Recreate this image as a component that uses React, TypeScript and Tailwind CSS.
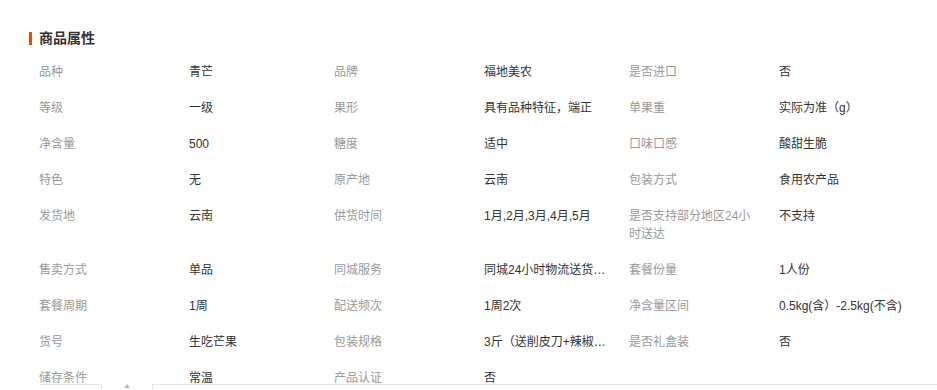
const rows: [string, string][][] = [
  [["品种", "青芒"], ["品牌", "福地美农"], ["是否进口", "否"]],
  [["等级", "一级"], ["果形", "具有品种特征，端正"], ["单果重", "实际为准（g）"]],
  [["净含量", "500"], ["糖度", "适中"], ["口味口感", "酸甜生脆"]],
  [["特色", "无"], ["原产地", "云南"], ["包装方式", "食用农产品"]],
  [["发货地", "云南"], ["供货时间", "1月,2月,3月,4月,5月"], ["是否支持部分地区24小时送达", "不支持"]],
  [["售卖方式", "单品"], ["同城服务", "同城24小时物流送货上门"], ["套餐份量", "1人份"]],
  [["套餐周期", "1周"], ["配送频次", "1周2次"], ["净含量区间", "0.5kg(含）-2.5kg(不含)"]],
  [["货号", "生吃芒果"], ["包装规格", "3斤（送削皮刀+辣椒盐）"], ["是否礼盒装", "否"]],
  [["储存条件", "常温"], ["产品认证", "否"]],
];

export default function App() {
  return (
    <div
      className="relative h-[390px] w-[937px] overflow-hidden bg-white text-[12px]"
      style={{ fontFamily: '"Liberation Sans", "Noto Sans CJK SC", sans-serif' }}
    >
      <div className="pl-[29px] pt-[29px]">
        <div className="flex h-[19px] items-center gap-[7px] text-[14px] font-bold text-[#333]">
          <span className="h-[13px] w-[3px] bg-[#ff4400]" />
          商品属性
        </div>
        <div className="mt-[6px] pl-[10px]">
          {rows.map((row, i) => (
            <div key={i} className="flex py-[9px] leading-[18px]">
              {row.map(([label, value], j) => (
                <div key={label} className="flex">
                  <div className="w-[150px] break-all pr-[26px] text-[#999]">{label}</div>
                  <div
                    className={
                      j === 2
                        ? "w-[150px] whitespace-nowrap text-[#333]"
                        : "w-[145px] overflow-hidden text-ellipsis whitespace-nowrap pr-[23px] text-[#333]"
                    }
                  >
                    {value}
                  </div>
                </div>
              ))}
            </div>
          ))}
        </div>
      </div>
      <div className="absolute inset-x-0 top-[384px] flex h-[10px] pl-[39px]">
        <div className="w-[63px] border-r border-t border-[#e5e5e5]" />
        <div className="flex w-[50px] justify-center">
          <span className="h-0 w-0 border-x-[3px] border-b-[4px] border-x-transparent border-b-[#bbb]" />
        </div>
        <div className="flex-1 border-l border-t border-[#e5e5e5]" />
      </div>
    </div>
  );
}
